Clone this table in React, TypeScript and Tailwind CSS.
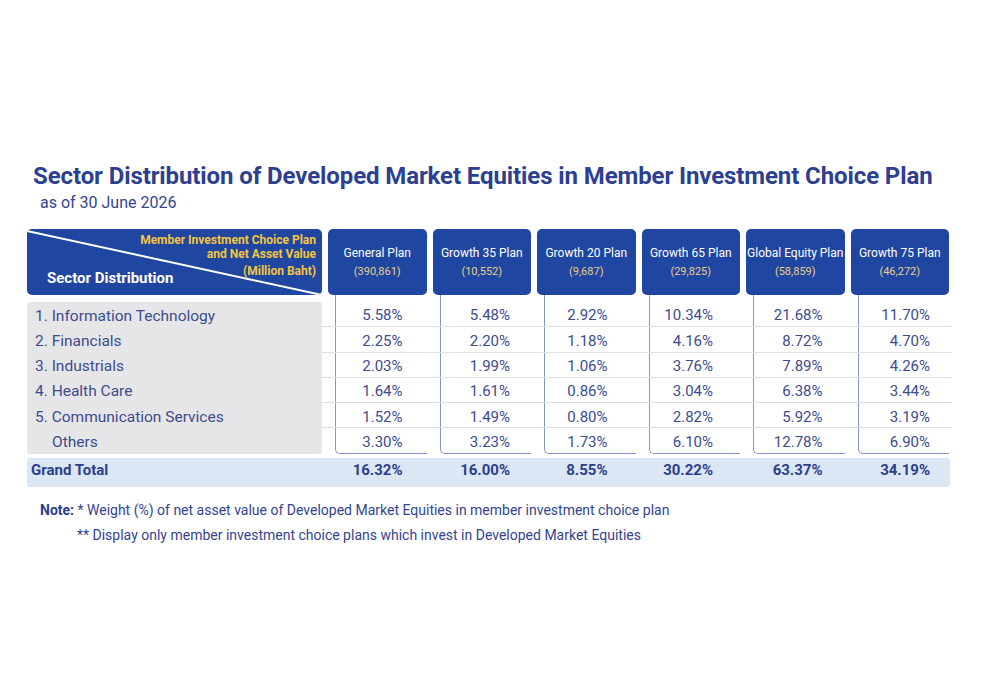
const plans = [
  { name: "General Plan", nav: "(390,861)", pr: "pr-[24px]" },
  { name: "Growth 35 Plan", nav: "(10,552)", pr: "pr-[21px]" },
  { name: "Growth 20 Plan", nav: "(9,687)", pr: "pr-[28px]" },
  { name: "Growth 65 Plan", nav: "(29,825)", pr: "pr-[27px]" },
  { name: "Global Equity Plan", nav: "(58,859)", pr: "pr-[22px]" },
  { name: "Growth 75 Plan", nav: "(46,272)", pr: "pr-[19px]" },
];

const rows = [
  { label: "1. Information Technology", values: ["5.58%", "5.48%", "2.92%", "10.34%", "21.68%", "11.70%"] },
  { label: "2. Financials", values: ["2.25%", "2.20%", "1.18%", "4.16%", "8.72%", "4.70%"] },
  { label: "3. Industrials", values: ["2.03%", "1.99%", "1.06%", "3.76%", "7.89%", "4.26%"] },
  { label: "4. Health Care", values: ["1.64%", "1.61%", "0.86%", "3.04%", "6.38%", "3.44%"] },
  { label: "5. Communication Services", values: ["1.52%", "1.49%", "0.80%", "2.82%", "5.92%", "3.19%"] },
  { label: "Others", values: ["3.30%", "3.23%", "1.73%", "6.10%", "12.78%", "6.90%"], indent: true },
];

const totals = ["16.32%", "16.00%", "8.55%", "30.22%", "63.37%", "34.19%"];

function CornerHeader() {
  return (
    <div className="relative h-[66px] w-[295px] shrink-0 overflow-hidden rounded-[5px] bg-[#1f46a0]">
      <svg className="absolute inset-0" width="295" height="66" viewBox="0 0 295 66">
        <line x1="0" y1="2" x2="295" y2="66" stroke="white" strokeWidth="2" />
      </svg>
      <div className="relative flex flex-col items-end pr-[6px] pt-[4px] text-[12px] font-bold leading-[14px] text-[#f4c53f]">
        <span>Member Investment Choice Plan</span>
        <span>and Net Asset Value</span>
        <span className="mt-[3px]">(Million Baht)</span>
      </div>
      <div className="absolute bottom-[6px] left-[20px] text-[15px] font-bold text-white">Sector Distribution</div>
    </div>
  );
}

export default function App() {
  return (
    <div className="h-[700px] w-[1000px] bg-white font-['Roboto',sans-serif] text-[#3d4c8e]">
      <div className="pl-[33px] pt-[161px]">
        <h1 className="text-[24px] font-bold leading-[30px] tracking-[-0.1px] text-[#2c3f91]">
          Sector Distribution of Developed Market Equities in Member Investment Choice Plan
        </h1>
        <p className="ml-[7px] mt-[2px] text-[16px] leading-[20px] text-[#34458e]">as of 30 June 2026</p>
      </div>

      <div className="ml-[27px] mt-[16px] w-[925px]">
        {/* header */}
        <div className="flex gap-[6px]">
          <CornerHeader />
          <div className="flex gap-[6px]">
            {plans.map((p) => (
              <div
                key={p.name}
                className="flex h-[66px] w-[98.5px] flex-col items-center rounded-[5px] bg-[#1f46a0] pt-[16px] text-center"
              >
                <span className="whitespace-nowrap text-[12px] leading-[16px] text-white">{p.name}</span>
                <span className="mt-[4px] text-[11px] leading-[14px] text-[#e9cf8a]">{p.nav}</span>
              </div>
            ))}
          </div>
        </div>

        {/* body */}
        <div className="flex">
          <div className="mt-[7px] w-[295px] shrink-0 rounded-[3px] bg-[#e6e6e8] pl-[8px]">
            {rows.map((r) => (
              <div
                key={r.label}
                className={`flex h-[25.3px] items-center pt-[3px] text-[15.5px] text-[#3d4c8e] ${r.indent ? "pl-[17px]" : ""}`}
              >
                {r.label}
              </div>
            ))}
          </div>
          <div className="w-[630px]">
            {rows.map((r, ri) => {
              const first = ri === 0;
              const last = ri === rows.length - 1;
              return (
                <div key={r.label} className={`flex ${last ? "" : "border-b border-[#dde0e8]"}`}>
                  {r.values.map((v, ci) => (
                    <div key={ci} className="w-[104.5px] shrink-0">
                      <div
                        className={`ml-[13px] flex items-center justify-end border-l border-[#8795c4] ${plans[ci].pr} ${
                          first ? "h-[31.3px] pt-[10px]" : last ? "h-[25.3px] pt-[3px]" : "h-[24.3px] pt-[3px]"
                        } ${last ? "rounded-bl-[5px] border-b" : ""} text-[15px]`}
                      >
                        {v}
                      </div>
                    </div>
                  ))}
                </div>
              );
            })}
          </div>
        </div>

        {/* total */}
        <div className="mt-[4px] flex h-[29px] w-[923px] items-center rounded-[3px] bg-[#dce7f5] pb-[5px] font-bold text-[#2b3f8a]">
          <div className="w-[295px] shrink-0 pl-[4px] text-[15px]">Grand Total</div>
          {totals.map((t, i) => (
            <div key={i} className={`w-[104.5px] shrink-0 text-right text-[15px] ${plans[i].pr}`}>
              {t}
            </div>
          ))}
        </div>

        {/* notes */}
        <div className="mt-[11px] text-[14px] leading-[25px] text-[#34458e]">
          <p className="pl-[13px]">
            <span className="font-bold text-[#2b3f8a]">Note:</span> * Weight (%) of net asset value of Developed Market
            Equities in member investment choice plan
          </p>
          <p className="pl-[50px]">** Display only member investment choice plans which invest in Developed Market Equities</p>
        </div>
      </div>
    </div>
  );
}
